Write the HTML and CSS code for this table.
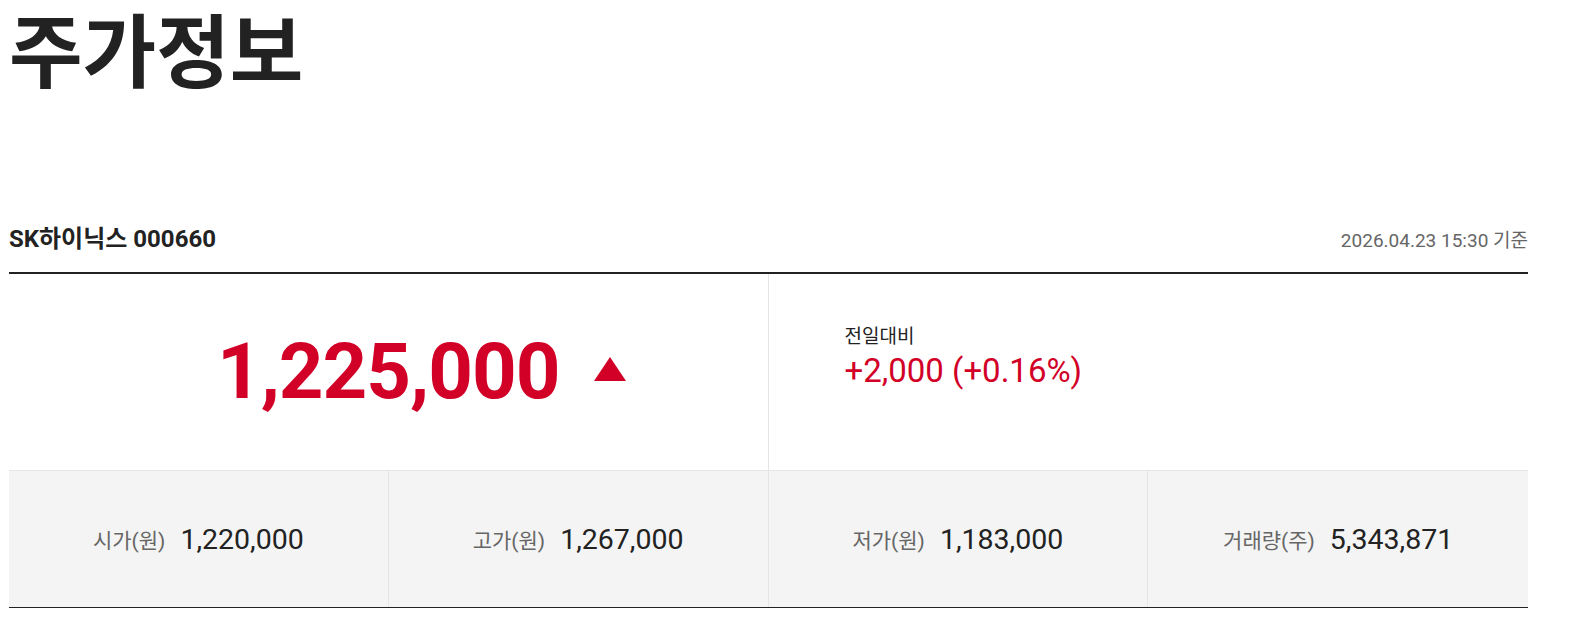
FILE: index.html
```html
<!DOCTYPE html>
<html lang="ko">
<head>
<meta charset="utf-8">
<title>주가정보</title>
<link rel="stylesheet" href="styles.css">
</head>
<body>
<div class="wrap">
  <h1 class="title">주가정보</h1>
  <div class="stock-head">
    <div class="stock-name">SK하이닉스 000660</div>
    <div class="stock-date">2026.04.23 15:30 기준</div>
  </div>
  <div class="summary">
    <div class="price-box">
      <span class="price">1,225,000</span>
      <span class="arrow"></span>
    </div>
    <div class="change-box">
      <div class="change-label">전일대비</div>
      <div class="change-value">+2,000 (+0.16%)</div>
    </div>
  </div>
  <div class="stats">
    <div class="stat"><span class="stat-label">시가(원)</span><span class="stat-value">1,220,000</span></div>
    <div class="stat"><span class="stat-label">고가(원)</span><span class="stat-value">1,267,000</span></div>
    <div class="stat"><span class="stat-label">저가(원)</span><span class="stat-value">1,183,000</span></div>
    <div class="stat"><span class="stat-label">거래량(주)</span><span class="stat-value">5,343,871</span></div>
  </div>
</div>
</body>
</html>
```

FILE: styles.css
```css
body {
  margin: 0;
  background: #fff;
  color: #222;
  font-family: Roboto, "Noto Sans CJK KR", sans-serif;
}
.wrap {
  margin-left: 9px;
  width: 1519px;
}
.title {
  margin: 0;
  font-family: "Noto Sans CJK KR", sans-serif;
  font-size: 80px;
  font-weight: 700;
  line-height: 88px;
  padding-top: 2px;
  color: #222;
}
.stock-head {
  margin-top: 129px;
  display: flex;
  justify-content: space-between;
  align-items: baseline;
  padding-bottom: 18px;
  border-bottom: 2px solid #222;
}
.stock-name {
  font-size: 24px;
  font-weight: 700;
  color: #222;
}
.stock-date {
  font-size: 19px;
  color: #666;
}
.summary {
  display: grid;
  grid-template-columns: 1fr 1fr;
  height: 196px;
  border-bottom: 1px solid #e5e5e5;
}
.price-box {
  display: flex;
  align-items: center;
  justify-content: center;
  gap: 34px;
  padding-left: 66px;
  padding-bottom: 2px;
  border-right: 1px solid #e5e5e5;
  color: #d20027;
}
.price {
  font-size: 78px;
  font-weight: 700;
  letter-spacing: -1px;
}
.arrow {
  width: 0;
  height: 0;
  border-left: 16px solid transparent;
  border-right: 16px solid transparent;
  border-bottom: 24px solid #d20027;
  margin-top: -4px;
}
.change-box {
  padding: 49px 0 0 76px;
}
.change-label {
  font-size: 19px;
  color: #222;
  line-height: 28px;
}
.change-value {
  font-size: 33px;
  color: #d20027;
  line-height: 40px;
}
.stats {
  display: grid;
  grid-template-columns: repeat(4, 1fr);
  height: 136px;
  background: #f4f4f4;
  border-bottom: 1px solid #222;
}
.stat {
  display: flex;
  align-items: center;
  justify-content: center;
  gap: 15px;
  border-right: 1px solid #e5e5e5;
}
.stat:last-child {
  border-right: none;
}
.stat-label {
  font-size: 21px;
  color: #666;
}
.stat-value {
  font-size: 28.5px;
  color: #222;
}
```
